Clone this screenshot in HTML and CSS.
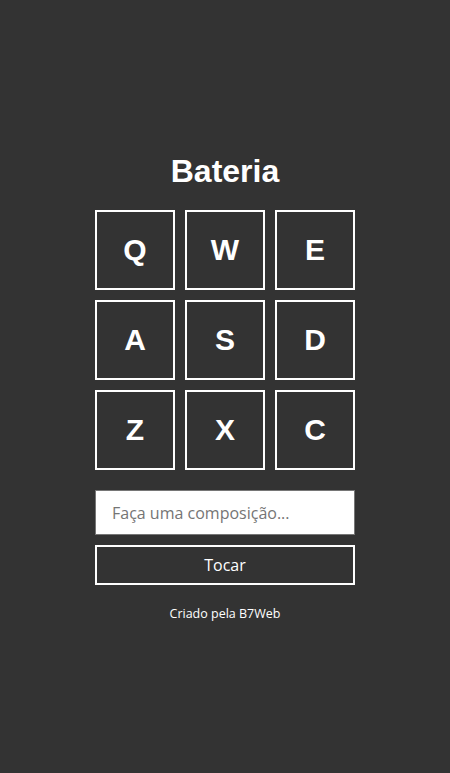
FILE: index.html
```html
<!DOCTYPE html>
<html lang="pt-BR">
<head>
<meta charset="utf-8">
<title>Bateria</title>
<link rel="stylesheet" href="styles.css">
</head>
<body>
<main class="app">
  <h1 class="title">Bateria</h1>
  <div class="keys">
    <div class="key">Q</div>
    <div class="key">W</div>
    <div class="key">E</div>
    <div class="key">A</div>
    <div class="key">S</div>
    <div class="key">D</div>
    <div class="key">Z</div>
    <div class="key">X</div>
    <div class="key">C</div>
  </div>
  <input class="composer" type="text" placeholder="Faça uma composição...">
  <button class="play">Tocar</button>
  <p class="footer">Criado pela B7Web</p>
</main>
</body>
</html>
```
FILE: styles.css
```css
html, body {
  margin: 0;
  padding: 0;
}
body {
  background: #333333;
  color: #ffffff;
  font-family: "Liberation Sans", Arial, sans-serif;
  min-height: 100vh;
  display: flex;
  align-items: center;
  justify-content: center;
}
.app {
  width: 260px;
  padding-top: 2px;
  display: flex;
  flex-direction: column;
}
.title {
  margin: 0 0 20px;
  font-size: 32px;
  font-weight: bold;
  text-align: center;
}
.keys {
  display: grid;
  grid-template-columns: repeat(3, 80px);
  gap: 10px;
}
.key {
  box-sizing: border-box;
  width: 80px;
  height: 80px;
  border: 2px solid #ffffff;
  display: flex;
  align-items: center;
  justify-content: center;
  font-size: 30px;
  font-weight: bold;
}
.composer {
  box-sizing: border-box;
  margin: 20px 0 0;
  height: 45px;
  width: 260px;
  padding: 0 16px;
  border: 1px solid #767676;
  background: #ffffff;
  font-family: "Open Sans", "Noto Sans", sans-serif;
  font-size: 16px;
  color: #333;
  outline: none;
}
.composer::placeholder {
  color: #757575;
}
.play {
  box-sizing: border-box;
  margin: 10px 0 0;
  height: 40px;
  width: 260px;
  border: 2px solid #ffffff;
  background: transparent;
  color: #ffffff;
  font-family: "Open Sans", "Noto Sans", sans-serif;
  font-size: 16px;
}
.footer {
  margin: 20px 0 0;
  text-align: center;
  font-family: "Open Sans", "Noto Sans", sans-serif;
  font-size: 12.5px;
  line-height: 17px;
}
```
